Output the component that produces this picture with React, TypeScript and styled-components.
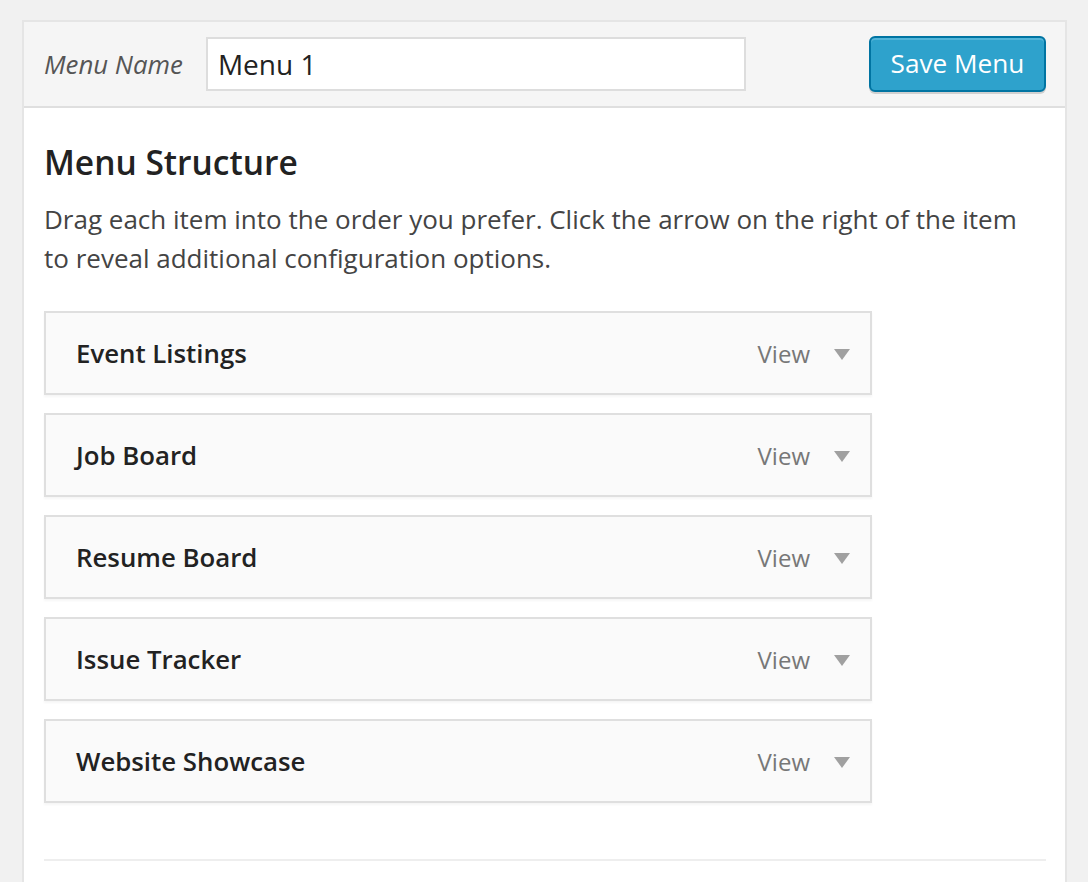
import React from "react";
import styled, { createGlobalStyle } from "styled-components";

const Global = createGlobalStyle`
  html, body { margin: 0; padding: 0; background: #f1f1f1; }
  body { font-family: "Open Sans", "Noto Sans", sans-serif; color: #444; }
  * { box-sizing: border-box; }
`;

const Page = styled.div`
  padding: 20px 21px 0 22px;
  height: 882px;
  overflow: hidden;
`;

const Panel = styled.div`
  border: 2px solid #e5e5e5;
  border-bottom: none;
  background: #fff;
  min-height: 900px;
`;

const Header = styled.div`
  display: flex;
  align-items: center;
  height: 86px;
  padding: 0 19px 0 20px;
  background: #f5f5f5;
  border-bottom: 2px solid #dfdfdf;
`;

const Label = styled.label`
  font-style: italic;
  font-size: 25.8px;
  color: #555;
  margin-right: 23px;
`;

const NameInput = styled.input`
  width: 540px;
  height: 54px;
  border: 2px solid #ddd;
  background: #fff;
  font-family: inherit;
  font-size: 28px;
  color: #222;
  padding: 0 10px;
  outline: none;
`;

const SaveButton = styled.button`
  margin-left: auto;
  height: 56px;
  width: 177px;
  border: 2px solid #0074a2;
  border-radius: 6px;
  background: #2ea2cc;
  box-shadow: inset 0 2px 0 rgba(120, 200, 230, 0.5), 0 2px 0 rgba(0, 0, 0, 0.15);
  color: #fff;
  font-family: inherit;
  font-size: 26.2px;
  padding: 0 0 3px;
`;

const Body = styled.div`
  padding: 30px 19px 0 20px;
`;

const Title = styled.h3`
  margin: 0;
  font-size: 33.5px;
  font-weight: 600;
  color: #222;
  line-height: 48px;
`;

const Desc = styled.p`
  margin: 14px 0 0;
  font-size: 26px;
  line-height: 39px;
  color: #444;
`;

const List = styled.ul`
  list-style: none;
  margin: 33px 0 0;
  padding: 0;
  display: flex;
  flex-direction: column;
  gap: 18px;
  width: 828px;
`;

const Item = styled.li`
  display: flex;
  align-items: center;
  height: 84px;
  padding: 0 20px 0 30px;
  background: #fafafa;
  border: 2px solid #dfdfdf;
  box-shadow: 0 2px 2px rgba(0, 0, 0, 0.04);
`;

const ItemTitle = styled.span`
  font-size: 25.8px;
  font-weight: 600;
  color: #222;
  flex: 1;
`;

const ViewLabel = styled.span`
  font-size: 24px;
  color: #777;
  margin-right: 24px;
`;

const Arrow = styled.span`
  width: 0;
  height: 0;
  border-left: 8px solid transparent;
  border-right: 8px solid transparent;
  border-top: 11px solid #a0a0a0;
  margin-top: 3px;
`;

const Divider = styled.hr`
  margin: 56px 0 0;
  border: none;
  border-top: 2px solid #eee;
`;

const items = ["Event Listings", "Job Board", "Resume Board", "Issue Tracker", "Website Showcase"];

export default function App() {
  return (
    <>
      <Global />
      <Page>
        <Panel>
          <Header>
            <Label>Menu Name</Label>
            <NameInput defaultValue="Menu 1" />
            <SaveButton>Save Menu</SaveButton>
          </Header>
          <Body>
            <Title>Menu Structure</Title>
            <Desc>
              Drag each item into the order you prefer. Click the arrow on the right of the item to reveal additional
              configuration options.
            </Desc>
            <List>
              {items.map((t) => (
                <Item key={t}>
                  <ItemTitle>{t}</ItemTitle>
                  <ViewLabel>View</ViewLabel>
                  <Arrow />
                </Item>
              ))}
            </List>
            <Divider />
          </Body>
        </Panel>
      </Page>
    </>
  );
}
